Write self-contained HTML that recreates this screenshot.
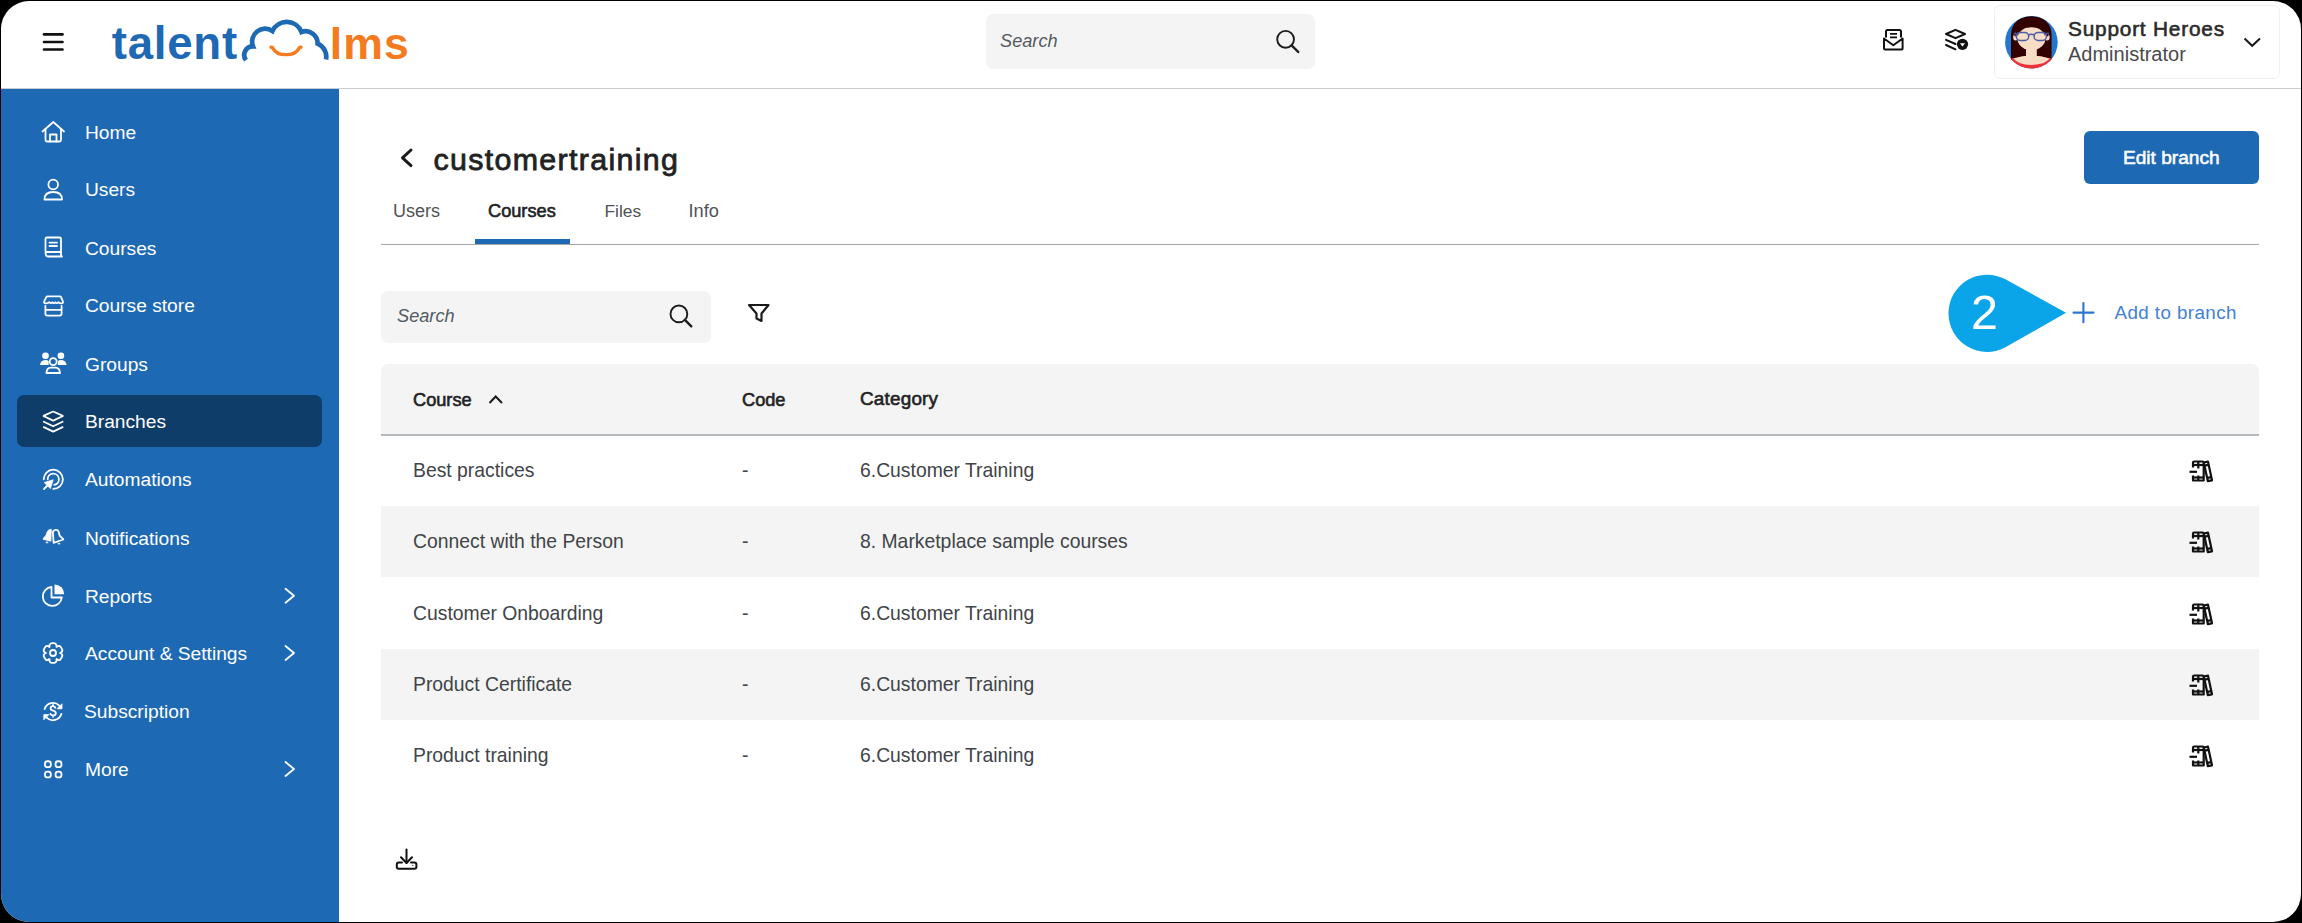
<!DOCTYPE html>
<html><head><meta charset="utf-8"><title>TalentLMS</title>
<style>
html,body{margin:0;padding:0;width:2302px;height:923px;overflow:hidden;background:#000;}
#win{position:absolute;left:1px;top:1px;width:2300px;height:921px;border-radius:28px;overflow:hidden;background:#fff;}
#inner{position:absolute;left:-1px;top:-1px;width:2302px;height:923px;}
.a{position:absolute;}
.t{position:absolute;white-space:nowrap;font-family:"Liberation Sans",sans-serif;}
svg{overflow:visible}
</style></head><body>
<div id="win"><div id="inner">
<svg class="a" style="left:40px;top:30px" width="26" height="24" viewBox="0 0 26 24"><g stroke="#111" stroke-width="2.6" stroke-linecap="round"><line x1="4" y1="4.4" x2="22.5" y2="4.4"/><line x1="4" y1="12" x2="22.5" y2="12"/><line x1="4" y1="19.5" x2="22.5" y2="19.5"/></g></svg>
<div class="t" style="left:111.8px;top:21.20px;font-size:45.6px;line-height:45.6px;font-weight:700;color:#1e69b4;font-style:normal;letter-spacing:0.75px;">talent</div>
<svg class="a" style="left:238px;top:14px" width="96" height="52" viewBox="238 14 96 52"><path d="M246 60.2 A8.6 8.6 0 0 1 253 46.4 A13 13 0 0 1 272.5 31 A15.8 15.8 0 0 1 301.5 32 A12 12 0 0 1 317.6 43.6 A14.2 14.2 0 0 1 326 59.5" fill="none" stroke="#1e69b4" stroke-width="4.7"/><path d="M271 47.2 Q272.5 47 273 48.2 C277 56.8 295 56.8 299 48.2 Q299.5 47 301 47.2" fill="none" stroke="#f47b20" stroke-width="3.4" stroke-linecap="round"/></svg>
<div class="t" style="left:329.8px;top:22.05px;font-size:44.6px;line-height:44.6px;font-weight:700;color:#f47b20;font-style:normal;letter-spacing:1.1px;">lms</div>
<div class="a" style="left:986px;top:14px;width:329px;height:55px;background:#f4f4f4;border-radius:7px"></div>
<div class="t" style="left:1000px;top:31.89px;font-size:18.2px;line-height:18.2px;font-weight:400;color:#555b61;font-style:italic;letter-spacing:0px;">Search</div>
<svg class="a" style="left:1272px;top:26px" width="30" height="30" viewBox="1272 26 30 30"><circle cx="1285.6" cy="39.3" r="8.4" fill="none" stroke="#1c1c1c" stroke-width="1.9"/><line x1="1291.6" y1="45.3" x2="1298.3" y2="52" stroke="#1c1c1c" stroke-width="2.4" stroke-linecap="round"/></svg>
<svg class="a" style="left:1880px;top:26px" width="28" height="28" viewBox="1880 26 28 28"><path d="M1886 37.5 V31.5 Q1886 30 1887.5 30 H1899.5 Q1901 30 1901 31.5 V37.5" fill="none" stroke="#111" stroke-width="2"/><line x1="1890" y1="33.8" x2="1897" y2="33.8" stroke="#111" stroke-width="1.8"/><line x1="1890" y1="37.3" x2="1897" y2="37.3" stroke="#111" stroke-width="1.8"/><path d="M1884 38.5 L1893.3 45.2 L1902.6 38.5 V48.5 Q1902.6 49.5 1901.6 49.5 H1885 Q1884 49.5 1884 48.5 Z" fill="none" stroke="#111" stroke-width="2" stroke-linejoin="round"/></svg>
<svg class="a" style="left:1942px;top:26px" width="30" height="28" viewBox="1942 26 30 28"><path d="M1946 34 L1955.5 29.8 L1965 34 L1955.5 38.2 Z" fill="none" stroke="#111" stroke-width="2" stroke-linejoin="round"/><path d="M1946 39.8 L1955.5 44" fill="none" stroke="#111" stroke-width="2" stroke-linecap="round"/><path d="M1946 45 L1955.5 49.3" fill="none" stroke="#111" stroke-width="2" stroke-linecap="round"/><circle cx="1962.5" cy="44.3" r="5.6" fill="#111"/><path d="M1959.9 43.2 H1965.1 L1962.5 46.5 Z" fill="#fff"/></svg>
<div class="a" style="left:1993.5px;top:4.5px;width:286px;height:74px;border:1px solid #f0f0f0;border-radius:6px;box-sizing:border-box"></div>
<svg class="a" style="left:2005.2px;top:16.2px" width="53" height="53" viewBox="0 0 53 53"><defs><clipPath id="av"><circle cx="26.4" cy="26.3" r="26.3"/></clipPath></defs><g clip-path="url(#av)"><rect width="53" height="53" fill="#2377cf"/><path d="M6 44 V19 C6 7 15 0.3 26.4 0.3 C38 0.3 46.6 7 46.6 19 V44 Z" fill="#330000"/><path d="M0 43.5 Q13 40.8 26.4 40.8 Q40 40.8 53 43.5 V53 H0 Z" fill="#f2323a"/><path d="M8.5 42.5 Q13 48.7 26.4 48.9 Q40 48.7 44.5 42.5 Q36 39.5 26.4 39.5 Q17 39.5 8.5 42.5 Z" fill="#f7ddc5"/><rect x="21" y="29" width="10.8" height="13" fill="#f7ddc5"/><ellipse cx="10.6" cy="21.3" rx="2.4" ry="3.2" fill="#f7ddc5"/><ellipse cx="42.2" cy="21.3" rx="2.4" ry="3.2" fill="#f7ddc5"/><ellipse cx="26.4" cy="22.6" rx="14" ry="11.6" fill="#f7ddc5"/><path d="M10.6 20.5 Q11 11.2 26.4 11.3 Q41.8 11.2 42.2 20.5 L43.5 20 V8 H9.3 V20 Z" fill="#330000"/><g fill="none" stroke="#4b5cab" stroke-width="1.5"><rect x="11.3" y="16.4" width="12.4" height="8" rx="4"/><rect x="29.1" y="16.4" width="12.4" height="8" rx="4"/><path d="M23.7 18.8 Q26.4 17.6 29.1 18.8"/><path d="M11.5 17.6 L9 17.2 M41.3 17.6 L43.8 17.2"/></g></g></svg>
<div class="t" style="left:2068px;top:18.99px;font-size:20.8px;line-height:20.8px;font-weight:400;color:#2b2b2b;font-style:normal;letter-spacing:0.8px;-webkit-text-stroke:0.6px #2b2b2b;">Support Heroes</div>
<div class="t" style="left:2068px;top:43.57px;font-size:20.0px;line-height:20.0px;font-weight:400;color:#4a4a4a;font-style:normal;letter-spacing:0px;">Administrator</div>
<svg class="a" style="left:2240px;top:34px" width="24" height="16" viewBox="2240 34 24 16"><path d="M2244.5 38.5 L2252.2 45.8 L2260 38.5" fill="none" stroke="#1a1a1a" stroke-width="2"/></svg>
<div class="a" style="left:0;top:88px;width:2302px;height:1px;background:#c9cdd2"></div>
<div class="a" style="left:0;top:89px;width:339px;height:834px;background:#1d69b3"></div>
<div class="a" style="left:17px;top:395px;width:305px;height:52px;background:#0f3d69;border-radius:7px"></div>
<div class="t" style="left:85px;top:123.05px;font-size:19.2px;line-height:19.2px;font-weight:400;color:#ffffff;font-style:normal;letter-spacing:0px;">Home</div>
<div class="t" style="left:85px;top:180.45px;font-size:19.2px;line-height:19.2px;font-weight:400;color:#ffffff;font-style:normal;letter-spacing:0px;">Users</div>
<div class="t" style="left:85px;top:238.85px;font-size:19.2px;line-height:19.2px;font-weight:400;color:#ffffff;font-style:normal;letter-spacing:0px;">Courses</div>
<div class="t" style="left:85px;top:296.35px;font-size:19.2px;line-height:19.2px;font-weight:400;color:#ffffff;font-style:normal;letter-spacing:0px;">Course store</div>
<div class="t" style="left:85px;top:354.85px;font-size:19.2px;line-height:19.2px;font-weight:400;color:#ffffff;font-style:normal;letter-spacing:0px;">Groups</div>
<div class="t" style="left:85px;top:412.35px;font-size:19.2px;line-height:19.2px;font-weight:400;color:#ffffff;font-style:normal;letter-spacing:0px;">Branches</div>
<div class="t" style="left:85px;top:469.85px;font-size:19.2px;line-height:19.2px;font-weight:400;color:#ffffff;font-style:normal;letter-spacing:0px;">Automations</div>
<div class="t" style="left:85px;top:528.85px;font-size:19.2px;line-height:19.2px;font-weight:400;color:#ffffff;font-style:normal;letter-spacing:0px;">Notifications</div>
<div class="t" style="left:85px;top:586.65px;font-size:19.2px;line-height:19.2px;font-weight:400;color:#ffffff;font-style:normal;letter-spacing:0px;">Reports</div>
<div class="t" style="left:85px;top:643.85px;font-size:19.2px;line-height:19.2px;font-weight:400;color:#ffffff;font-style:normal;letter-spacing:0px;">Account &amp; Settings</div>
<div class="t" style="left:84px;top:702.35px;font-size:19.2px;line-height:19.2px;font-weight:400;color:#ffffff;font-style:normal;letter-spacing:0px;">Subscription</div>
<div class="t" style="left:85px;top:759.85px;font-size:19.2px;line-height:19.2px;font-weight:400;color:#ffffff;font-style:normal;letter-spacing:0px;">More</div>
<svg class="a" style="left:0;top:0" width="339" height="923" viewBox="0 0 339 923"><path d="M42.5 131.5 L53.3 122 L64 131.5" fill="none" stroke="#fff" stroke-width="1.8" stroke-linecap="round" stroke-linejoin="round"/><path d="M45.5 129.5 V140 Q45.5 141.5 47 141.5 H59.5 Q61 141.5 61 140 V129.5" fill="none" stroke="#fff" stroke-width="1.8" stroke-linecap="round" stroke-linejoin="round"/><path d="M50 141.5 V134.5 H56.5 V141.5" fill="none" stroke="#fff" stroke-width="1.8" stroke-linecap="round" stroke-linejoin="round"/><circle cx="53.2" cy="184.5" r="4.8" fill="none" stroke="#fff" stroke-width="1.8" stroke-linecap="round" stroke-linejoin="round"/><path d="M44.5 199.5 Q44.5 192 53.2 192 Q62 192 62 199.5 Z" fill="none" stroke="#fff" stroke-width="1.8" stroke-linecap="round" stroke-linejoin="round"/><path d="M45.5 252 V239 Q45.5 237.5 47 237.5 H59.5 Q61 237.5 61 239 V252 M45.5 252 Q45.5 256.5 48 256.5 H62 M45.5 252 H61 V256.5" fill="none" stroke="#fff" stroke-width="1.8" stroke-linecap="round" stroke-linejoin="round"/><line x1="49.5" y1="242.6" x2="57" y2="242.6" fill="none" stroke="#fff" stroke-width="1.8" stroke-linecap="round" stroke-linejoin="round"/><line x1="49.5" y1="246" x2="57" y2="246" fill="none" stroke="#fff" stroke-width="1.8" stroke-linecap="round" stroke-linejoin="round"/><path d="M47.6 296.3 H59.8 Q60.7 296.3 61.1 297.1 L62.9 301.4 Q63.5 303.3 61.6 303.4 Q59.6 303.6 58.3 302.2 Q56.9 304 55.4 302.3 Q53.9 304.2 52.4 302.3 Q50.9 304 49.3 302.2 Q47.9 303.6 45.6 303.4 Q43.5 303.3 44.2 301.4 L46.3 297.1 Q46.7 296.3 47.6 296.3 Z" fill="none" stroke="#fff" stroke-width="1.8" stroke-linecap="round" stroke-linejoin="round" stroke-width="1.7"/><path d="M45.4 305.9 V313.5 Q45.4 315.6 47.5 315.6 H59.5 Q61.6 315.6 61.6 313.5 V305.9 M45.4 309.8 H61.6" fill="none" stroke="#fff" stroke-width="1.8" stroke-linecap="round" stroke-linejoin="round" stroke-width="1.8"/><g fill="#fff"><rect x="42.2" y="352.6" width="6.6" height="6.4" rx="3"/><rect x="57.6" y="352.6" width="6.6" height="6.4" rx="3"/><path d="M40 365.1 Q40.6 360.3 45.2 360.1 Q48 360.1 48.7 361.2 L48.7 365.1 Z"/><path d="M66.6 365.1 Q66 360.3 61.4 360.1 Q58.6 360.1 57.9 361.2 L57.9 365.1 Z"/></g><circle cx="53.2" cy="361.6" r="3.5" fill="none" stroke="#fff" stroke-width="1.8" stroke-linecap="round" stroke-linejoin="round"/><path d="M46.4 373 Q46.8 367.8 50.8 367.7 H55.6 Q59.6 367.8 60 373 Z" fill="none" stroke="#fff" stroke-width="1.8" stroke-linecap="round" stroke-linejoin="round"/><path d="M44 416.3 Q43.3 416 44 415.6 L52.6 411.8 Q53.2 411.5 53.8 411.8 L62.4 415.6 Q63.1 416 62.4 416.3 L53.8 420.4 Q53.2 420.7 52.6 420.4 Z" fill="none" stroke="#fff" stroke-width="1.8" stroke-linecap="round" stroke-linejoin="round" stroke-width="2.1"/><path d="M43.8 421.8 L53.2 426.3 L62.6 421.8" fill="none" stroke="#fff" stroke-width="1.8" stroke-linecap="round" stroke-linejoin="round" stroke-width="2.1"/><path d="M43.8 427.1 L53.2 431.6 L62.6 427.1" fill="none" stroke="#fff" stroke-width="1.8" stroke-linecap="round" stroke-linejoin="round" stroke-width="2.1"/><path d="M43.7 479.3 A9.6 9.6 0 1 1 53.3 488.9" fill="none" stroke="#fff" stroke-width="1.8" stroke-linecap="round" stroke-linejoin="round"/><path d="M47.7 479.3 A5.6 5.6 0 1 1 54.3 484.8" fill="none" stroke="#fff" stroke-width="1.8" stroke-linecap="round" stroke-linejoin="round"/><path d="M44 489 L48 485" fill="none" stroke="#fff" stroke-width="1.8" stroke-linecap="round" stroke-linejoin="round" stroke-width="2.2"/><path d="M53.2 479.8 L44.3 482.6 L50.4 488.6 Z" fill="#fff" stroke="#fff" stroke-width="0.8" stroke-linejoin="round"/><path d="M51.3 529.2 C48.3 529.4 46.9 531.5 46.4 534.3 C45.6 536.4 43.6 537.4 43 539.2 L50.9 541.2 Z" fill="#fff" stroke="#fff" stroke-width="0.8" stroke-linejoin="round"/><path d="M52.8 532.2 C53.4 529.4 57.6 529 58.6 531.6 L59.6 535.4 C60.6 537 62.6 538 63.3 539.5 L53.6 542.8 C53.4 539.2 53.1 535.5 52.8 532.2 Z" fill="none" stroke="#fff" stroke-width="1.8" stroke-linecap="round" stroke-linejoin="round" stroke-width="1.7"/><ellipse cx="47" cy="542.4" rx="1.4" ry="0.9" fill="#fff" opacity="0.85"/><ellipse cx="59" cy="543.6" rx="1.4" ry="0.9" fill="#fff" opacity="0.85"/><path d="M51.5 587 A9.5 9.5 0 1 0 61.8 597.5 H51.5 Z" fill="none" stroke="#fff" stroke-width="1.8" stroke-linecap="round" stroke-linejoin="round"/><path d="M54.5 584.5 A9.7 9.7 0 0 1 64.2 594.2 H54.5 Z" fill="#fff"/><path d="M49.50 646.94 Q49.10 644.23 50.80 643.45 A9.8 9.8 0 0 1 55.20 643.45 Q56.90 644.23 56.50 646.94 Q58.64 645.23 60.17 646.32 A9.8 9.8 0 0 1 62.37 650.13 Q62.55 652.00 60.00 653.00 Q62.55 654.00 62.37 655.87 A9.8 9.8 0 0 1 60.17 659.68 Q58.64 660.77 56.50 659.06 Q56.90 661.77 55.20 662.55 A9.8 9.8 0 0 1 50.80 662.55 Q49.10 661.77 49.50 659.06 Q47.36 660.77 45.83 659.68 A9.8 9.8 0 0 1 43.63 655.87 Q43.45 654.00 46.00 653.00 Q43.45 652.00 43.63 650.13 A9.8 9.8 0 0 1 45.83 646.32 Q47.36 645.23 49.50 646.94 Z" fill="none" stroke="#fff" stroke-width="1.8" stroke-linecap="round" stroke-linejoin="round" stroke-width="1.8"/><circle cx="53" cy="653" r="3" fill="none" stroke="#fff" stroke-width="1.8" stroke-linecap="round" stroke-linejoin="round"/><g transform="translate(0 -0.8)"><path d="M44.6 709.8 A8.8 8.8 0 0 1 59.3 706.5" fill="none" stroke="#fff" stroke-width="1.8" stroke-linecap="round" stroke-linejoin="round"/><path d="M62 704.6 V709.6 H57 Z" fill="#fff" stroke="#fff" stroke-width="0.8" stroke-linejoin="round"/><path d="M61.4 714.6 A8.8 8.8 0 0 1 46.7 718.5" fill="none" stroke="#fff" stroke-width="1.8" stroke-linecap="round" stroke-linejoin="round"/><path d="M43.8 720.6 V715.4 H48.9 Z" fill="#fff" stroke="#fff" stroke-width="0.8" stroke-linejoin="round"/><path d="M55.4 708.6 Q54.6 707 52.9 707 Q50.6 707 50.6 709.1 Q50.6 710.9 53.1 711.4 Q55.8 711.9 55.8 714 Q55.8 716.2 53.1 716.2 Q51.1 716.2 50.4 714.6 M53 705.6 V707 M53 716.2 V717.6" fill="none" stroke="#fff" stroke-width="1.8" stroke-linecap="round" stroke-linejoin="round" stroke-width="1.7"/></g><rect x="44.949999999999996" y="761.25" width="5.9" height="5.9" rx="2.5" fill="none" stroke="#fff" stroke-width="1.8" stroke-linecap="round" stroke-linejoin="round" stroke-width="2"/><rect x="55.55" y="761.25" width="5.9" height="5.9" rx="2.5" fill="none" stroke="#fff" stroke-width="1.8" stroke-linecap="round" stroke-linejoin="round" stroke-width="2"/><rect x="44.949999999999996" y="771.55" width="5.9" height="5.9" rx="2.5" fill="none" stroke="#fff" stroke-width="1.8" stroke-linecap="round" stroke-linejoin="round" stroke-width="2"/><rect x="55.55" y="771.55" width="5.9" height="5.9" rx="2.5" fill="none" stroke="#fff" stroke-width="1.8" stroke-linecap="round" stroke-linejoin="round" stroke-width="2"/><path d="M285.5 588.7 L294 595.7 L285.5 602.7" fill="none" stroke="#fff" stroke-width="1.8" stroke-linecap="round" stroke-linejoin="round"/><path d="M285.5 646 L294 653 L285.5 660" fill="none" stroke="#fff" stroke-width="1.8" stroke-linecap="round" stroke-linejoin="round"/><path d="M285.5 762 L294 769 L285.5 776" fill="none" stroke="#fff" stroke-width="1.8" stroke-linecap="round" stroke-linejoin="round"/></svg>
<svg class="a" style="left:396px;top:144px" width="22" height="28" viewBox="396 144 22 28"><path d="M411 150 L402.5 157.8 L411 165.6" fill="none" stroke="#1a1a1a" stroke-width="3" stroke-linecap="round" stroke-linejoin="round"/></svg>
<div class="t" style="left:433.5px;top:143.87px;font-size:30.4px;line-height:30.4px;font-weight:400;color:#222222;font-style:normal;letter-spacing:1.32px;-webkit-text-stroke:0.8px #222222;">customertraining</div>
<div class="t" style="left:393px;top:202.26px;font-size:18.0px;line-height:18.0px;font-weight:400;color:#4f5256;font-style:normal;letter-spacing:0px;">Users</div>
<div class="t" style="left:488px;top:202.09px;font-size:18.2px;line-height:18.2px;font-weight:400;color:#222222;font-style:normal;letter-spacing:0px;-webkit-text-stroke:0.6px #222222;">Courses</div>
<div class="t" style="left:604.5px;top:202.77px;font-size:17.4px;line-height:17.4px;font-weight:400;color:#4f5256;font-style:normal;letter-spacing:0px;">Files</div>
<div class="t" style="left:688.5px;top:202.09px;font-size:18.2px;line-height:18.2px;font-weight:400;color:#4f5256;font-style:normal;letter-spacing:0px;">Info</div>
<div class="a" style="left:381px;top:244px;width:1878px;height:1px;background:#a2a6aa"></div>
<div class="a" style="left:475px;top:239px;width:95px;height:5px;background:#1e69b4"></div>
<div class="a" style="left:2084px;top:131px;width:175px;height:53px;background:#1e69b4;border-radius:6px"></div>
<div class="t" style="left:2123px;top:147.83px;font-size:19.1px;line-height:19.1px;font-weight:400;color:#ffffff;font-style:normal;letter-spacing:0px;-webkit-text-stroke:0.55px #ffffff;">Edit branch</div>
<div class="a" style="left:381px;top:291px;width:330px;height:52px;background:#f4f4f4;border-radius:7px"></div>
<div class="t" style="left:397px;top:307.29px;font-size:18.2px;line-height:18.2px;font-weight:400;color:#555b61;font-style:italic;letter-spacing:0px;">Search</div>
<svg class="a" style="left:665px;top:300px" width="32" height="32" viewBox="665 300 32 32"><circle cx="678.9" cy="313.9" r="8.4" fill="none" stroke="#1c1c1c" stroke-width="1.9"/><line x1="684.9" y1="319.9" x2="691.3" y2="326.3" stroke="#1c1c1c" stroke-width="2.4" stroke-linecap="round"/></svg>
<svg class="a" style="left:744px;top:300px" width="30" height="26" viewBox="744 300 30 26"><path d="M749 305 H768.5 L761.5 313.5 V321 L756.5 318.5 V313.5 Z" fill="none" stroke="#1a1a1a" stroke-width="2.2" stroke-linejoin="round"/></svg>
<svg class="a" style="left:2070px;top:300px" width="28" height="26" viewBox="2070 300 28 26"><path d="M2083.4 303 V322.3 M2073.5 312.6 H2093.5" stroke="#2b76d2" stroke-width="2.1" stroke-linecap="round"/></svg>
<div class="t" style="left:2114.5px;top:303.59px;font-size:18.8px;line-height:18.8px;font-weight:400;color:#4281d4;font-style:normal;letter-spacing:0.42px;">Add to branch</div>
<svg class="a" style="left:1940px;top:265px" width="135" height="95" viewBox="1940 265 135 95"><path d="M2005.9 279.6 L2066 312.8 L2005.9 347 A38.6 38.6 0 1 1 2005.9 279.6 Z" fill="#0aa5e9"/></svg>
<div class="t" style="left:1971px;top:288.34px;font-size:48.5px;line-height:48.5px;font-weight:400;color:#ffffff;font-style:normal;letter-spacing:0px;">2</div>
<div class="a" style="left:381px;top:364px;width:1878px;height:71px;background:#f4f4f4;border-radius:7px 7px 0 0"></div>
<div class="a" style="left:381px;top:434px;width:1878px;height:1.5px;background:#b5babe"></div>
<div class="t" style="left:413px;top:390.59px;font-size:18.2px;line-height:18.2px;font-weight:400;color:#222222;font-style:normal;letter-spacing:0px;-webkit-text-stroke:0.6px #222222;">Course</div>
<svg class="a" style="left:485px;top:390px" width="22" height="18" viewBox="485 390 22 18"><path d="M489.5 403 L495.7 396.5 L502 403" fill="none" stroke="#1a1a1a" stroke-width="2"/></svg>
<div class="t" style="left:742px;top:390.59px;font-size:18.2px;line-height:18.2px;font-weight:400;color:#222222;font-style:normal;letter-spacing:0px;-webkit-text-stroke:0.6px #222222;">Code</div>
<div class="t" style="left:860px;top:390.00px;font-size:18.9px;line-height:18.9px;font-weight:400;color:#222222;font-style:normal;letter-spacing:0.2px;-webkit-text-stroke:0.6px #222222;">Category</div>
<div class="t" style="left:413px;top:461.22px;font-size:19.35px;line-height:19.35px;font-weight:400;color:#404448;font-style:normal;letter-spacing:0px;">Best practices</div>
<div class="t" style="left:742px;top:461.22px;font-size:19.35px;line-height:19.35px;font-weight:400;color:#404448;font-style:normal;letter-spacing:0px;">-</div>
<div class="t" style="left:860px;top:461.22px;font-size:19.35px;line-height:19.35px;font-weight:400;color:#404448;font-style:normal;letter-spacing:0px;">6.Customer Training</div>
<svg class="a" style="left:2186px;top:458.1px" width="30" height="26" viewBox="2186 458.1 30 26"><g transform="translate(0 0.6)" fill="none" stroke="#111" stroke-width="2.2" stroke-linejoin="round"><path d="M2193 467 V462.2 Q2193 461 2194.2 461 H2202.5 Q2203.7 461 2203.7 462.2 V480 H2193 V475"/><line x1="2198.3" y1="461" x2="2198.3" y2="468"/><line x1="2198.3" y1="475" x2="2198.3" y2="480"/><line x1="2193" y1="464.5" x2="2203.7" y2="464.5"/><line x1="2193" y1="477" x2="2203.7" y2="477"/><path d="M2203.8 462 L2208 461.2 L2212 479.8 L2207.8 480.6 Z"/><line x1="2204.6" y1="465.2" x2="2208.7" y2="464.4"/><line x1="2207.2" y1="477.4" x2="2211.3" y2="476.6"/><line x1="2189.5" y1="471.3" x2="2197" y2="471.3" stroke-width="2.2"/></g></svg>
<div class="a" style="left:381px;top:506.1px;width:1878px;height:71.25px;background:#f4f4f4"></div>
<div class="t" style="left:413px;top:532.47px;font-size:19.35px;line-height:19.35px;font-weight:400;color:#404448;font-style:normal;letter-spacing:0px;">Connect with the Person</div>
<div class="t" style="left:742px;top:532.47px;font-size:19.35px;line-height:19.35px;font-weight:400;color:#404448;font-style:normal;letter-spacing:0px;">-</div>
<div class="t" style="left:860px;top:532.47px;font-size:19.35px;line-height:19.35px;font-weight:400;color:#404448;font-style:normal;letter-spacing:0px;">8. Marketplace sample courses</div>
<svg class="a" style="left:2186px;top:529.4px" width="30" height="26" viewBox="2186 529.4 30 26"><g transform="translate(0 71.9)" fill="none" stroke="#111" stroke-width="2.2" stroke-linejoin="round"><path d="M2193 467 V462.2 Q2193 461 2194.2 461 H2202.5 Q2203.7 461 2203.7 462.2 V480 H2193 V475"/><line x1="2198.3" y1="461" x2="2198.3" y2="468"/><line x1="2198.3" y1="475" x2="2198.3" y2="480"/><line x1="2193" y1="464.5" x2="2203.7" y2="464.5"/><line x1="2193" y1="477" x2="2203.7" y2="477"/><path d="M2203.8 462 L2208 461.2 L2212 479.8 L2207.8 480.6 Z"/><line x1="2204.6" y1="465.2" x2="2208.7" y2="464.4"/><line x1="2207.2" y1="477.4" x2="2211.3" y2="476.6"/><line x1="2189.5" y1="471.3" x2="2197" y2="471.3" stroke-width="2.2"/></g></svg>
<div class="t" style="left:413px;top:603.72px;font-size:19.35px;line-height:19.35px;font-weight:400;color:#404448;font-style:normal;letter-spacing:0px;">Customer Onboarding</div>
<div class="t" style="left:742px;top:603.72px;font-size:19.35px;line-height:19.35px;font-weight:400;color:#404448;font-style:normal;letter-spacing:0px;">-</div>
<div class="t" style="left:860px;top:603.72px;font-size:19.35px;line-height:19.35px;font-weight:400;color:#404448;font-style:normal;letter-spacing:0px;">6.Customer Training</div>
<svg class="a" style="left:2186px;top:600.6px" width="30" height="26" viewBox="2186 600.6 30 26"><g transform="translate(0 143.1)" fill="none" stroke="#111" stroke-width="2.2" stroke-linejoin="round"><path d="M2193 467 V462.2 Q2193 461 2194.2 461 H2202.5 Q2203.7 461 2203.7 462.2 V480 H2193 V475"/><line x1="2198.3" y1="461" x2="2198.3" y2="468"/><line x1="2198.3" y1="475" x2="2198.3" y2="480"/><line x1="2193" y1="464.5" x2="2203.7" y2="464.5"/><line x1="2193" y1="477" x2="2203.7" y2="477"/><path d="M2203.8 462 L2208 461.2 L2212 479.8 L2207.8 480.6 Z"/><line x1="2204.6" y1="465.2" x2="2208.7" y2="464.4"/><line x1="2207.2" y1="477.4" x2="2211.3" y2="476.6"/><line x1="2189.5" y1="471.3" x2="2197" y2="471.3" stroke-width="2.2"/></g></svg>
<div class="a" style="left:381px;top:648.5px;width:1878px;height:71.25px;background:#f4f4f4"></div>
<div class="t" style="left:413px;top:674.97px;font-size:19.35px;line-height:19.35px;font-weight:400;color:#404448;font-style:normal;letter-spacing:0px;">Product Certificate</div>
<div class="t" style="left:742px;top:674.97px;font-size:19.35px;line-height:19.35px;font-weight:400;color:#404448;font-style:normal;letter-spacing:0px;">-</div>
<div class="t" style="left:860px;top:674.97px;font-size:19.35px;line-height:19.35px;font-weight:400;color:#404448;font-style:normal;letter-spacing:0px;">6.Customer Training</div>
<svg class="a" style="left:2186px;top:671.8px" width="30" height="26" viewBox="2186 671.8 30 26"><g transform="translate(0 214.3)" fill="none" stroke="#111" stroke-width="2.2" stroke-linejoin="round"><path d="M2193 467 V462.2 Q2193 461 2194.2 461 H2202.5 Q2203.7 461 2203.7 462.2 V480 H2193 V475"/><line x1="2198.3" y1="461" x2="2198.3" y2="468"/><line x1="2198.3" y1="475" x2="2198.3" y2="480"/><line x1="2193" y1="464.5" x2="2203.7" y2="464.5"/><line x1="2193" y1="477" x2="2203.7" y2="477"/><path d="M2203.8 462 L2208 461.2 L2212 479.8 L2207.8 480.6 Z"/><line x1="2204.6" y1="465.2" x2="2208.7" y2="464.4"/><line x1="2207.2" y1="477.4" x2="2211.3" y2="476.6"/><line x1="2189.5" y1="471.3" x2="2197" y2="471.3" stroke-width="2.2"/></g></svg>
<div class="t" style="left:413px;top:746.22px;font-size:19.35px;line-height:19.35px;font-weight:400;color:#404448;font-style:normal;letter-spacing:0px;">Product training</div>
<div class="t" style="left:742px;top:746.22px;font-size:19.35px;line-height:19.35px;font-weight:400;color:#404448;font-style:normal;letter-spacing:0px;">-</div>
<div class="t" style="left:860px;top:746.22px;font-size:19.35px;line-height:19.35px;font-weight:400;color:#404448;font-style:normal;letter-spacing:0px;">6.Customer Training</div>
<svg class="a" style="left:2186px;top:743.1px" width="30" height="26" viewBox="2186 743.1 30 26"><g transform="translate(0 285.6)" fill="none" stroke="#111" stroke-width="2.2" stroke-linejoin="round"><path d="M2193 467 V462.2 Q2193 461 2194.2 461 H2202.5 Q2203.7 461 2203.7 462.2 V480 H2193 V475"/><line x1="2198.3" y1="461" x2="2198.3" y2="468"/><line x1="2198.3" y1="475" x2="2198.3" y2="480"/><line x1="2193" y1="464.5" x2="2203.7" y2="464.5"/><line x1="2193" y1="477" x2="2203.7" y2="477"/><path d="M2203.8 462 L2208 461.2 L2212 479.8 L2207.8 480.6 Z"/><line x1="2204.6" y1="465.2" x2="2208.7" y2="464.4"/><line x1="2207.2" y1="477.4" x2="2211.3" y2="476.6"/><line x1="2189.5" y1="471.3" x2="2197" y2="471.3" stroke-width="2.2"/></g></svg>
<svg class="a" style="left:392px;top:845px" width="30" height="28" viewBox="392 845 30 28"><g fill="none" stroke="#111" stroke-width="2" stroke-linecap="round" stroke-linejoin="round"><line x1="406.5" y1="849.6" x2="406.5" y2="863"/><path d="M401 857.2 L406.5 863 L412 857.2"/><path d="M402 862.5 H398.8 Q396.8 862.5 396.8 864.5 V866.7 Q396.8 868.7 398.8 868.7 H414.4 Q416.4 868.7 416.4 866.7 V864.5 Q416.4 862.5 414.4 862.5 H411"/><circle cx="412.8" cy="865.3" r="0.6" fill="#111" stroke="none"/></g></svg>
</div></div>
</body></html>
